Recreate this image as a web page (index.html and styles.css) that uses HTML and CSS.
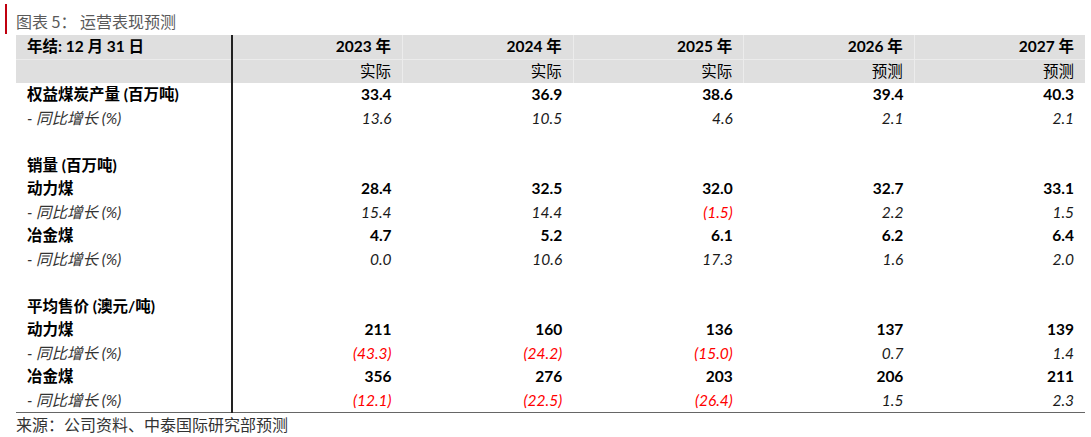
FILE: index.html
```html
<!DOCTYPE html>
<html lang="zh-CN">
<head>
<meta charset="utf-8">
<title>运营表现预测</title>
<link rel="stylesheet" href="styles.css">
</head>
<body>
<div class="page">
  <div class="title">图表 5： 运营表现预测</div>
  <table class="data">
    <colgroup>
      <col class="c-label"><col class="c-year"><col class="c-year"><col class="c-year"><col class="c-year"><col class="c-year">
    </colgroup>
    <thead>
      <tr class="h1">
        <th class="label">年结: 12 月 31 日</th>
        <th>2023 年</th><th>2024 年</th><th>2025 年</th><th>2026 年</th><th>2027 年</th>
      </tr>
      <tr class="h2">
        <th class="label"></th>
        <th>实际</th><th>实际</th><th>实际</th><th>预测</th><th>预测</th>
      </tr>
    </thead>
    <tbody>
      <tr class="main"><td class="label">权益煤炭产量 (百万吨)</td><td>33.4</td><td>36.9</td><td>38.6</td><td>39.4</td><td>40.3</td></tr>
      <tr class="sub"><td class="label">- 同比增长 (%)</td><td>13.6</td><td>10.5</td><td>4.6</td><td>2.1</td><td>2.1</td></tr>
      <tr class="blank"><td class="label"></td><td></td><td></td><td></td><td></td><td></td></tr>
      <tr class="main"><td class="label">销量 (百万吨)</td><td></td><td></td><td></td><td></td><td></td></tr>
      <tr class="main"><td class="label">动力煤</td><td>28.4</td><td>32.5</td><td>32.0</td><td>32.7</td><td>33.1</td></tr>
      <tr class="sub"><td class="label">- 同比增长 (%)</td><td>15.4</td><td>14.4</td><td class="neg">(1.5)</td><td>2.2</td><td>1.5</td></tr>
      <tr class="main"><td class="label">冶金煤</td><td>4.7</td><td>5.2</td><td>6.1</td><td>6.2</td><td>6.4</td></tr>
      <tr class="sub"><td class="label">- 同比增长 (%)</td><td>0.0</td><td>10.6</td><td>17.3</td><td>1.6</td><td>2.0</td></tr>
      <tr class="blank"><td class="label"></td><td></td><td></td><td></td><td></td><td></td></tr>
      <tr class="main"><td class="label">平均售价 (澳元/吨)</td><td></td><td></td><td></td><td></td><td></td></tr>
      <tr class="main"><td class="label">动力煤</td><td>211</td><td>160</td><td>136</td><td>137</td><td>139</td></tr>
      <tr class="sub"><td class="label">- 同比增长 (%)</td><td class="neg">(43.3)</td><td class="neg">(24.2)</td><td class="neg">(15.0)</td><td>0.7</td><td>1.4</td></tr>
      <tr class="main"><td class="label">冶金煤</td><td>356</td><td>276</td><td>203</td><td>206</td><td>211</td></tr>
      <tr class="sub last"><td class="label">- 同比增长 (%)</td><td class="neg">(12.1)</td><td class="neg">(22.5)</td><td class="neg">(26.4)</td><td>1.5</td><td>2.3</td></tr>
    </tbody>
  </table>
  <div class="source">来源：公司资料、中泰国际研究部预测</div>
</div>
</body>
</html>
```

FILE: styles.css
```css
html, body {
  margin: 0;
  padding: 0;
  background: #ffffff;
}

.page {
  width: 1091px;
  height: 437px;
  overflow: hidden;
  font-family: Lato, "Noto Sans CJK SC", sans-serif;
  color: #000;
}

.title {
  margin: 4px 0 0 5px;
  height: 30px;
  border-left: 2px solid #c0000f;
  padding-left: 9px;
  box-sizing: border-box;
  font-family: "Noto Sans CJK SC", sans-serif;
  font-size: 16px;
  line-height: 34px;
  color: #5a5a5a;
}

.data {
  margin: 1px 0 0 16px;
  border-collapse: collapse;
  table-layout: fixed;
  width: 1069px;
  font-size: 15.5px;
}

.c-label { width: 216px; }
.c-year { width: 170.6px; }

.data th,
.data td {
  height: 23.5px;
  padding: 0 11px 0 0;
  text-align: right;
  white-space: nowrap;
  line-height: 23.5px;
  box-sizing: border-box;
}

.data .label {
  text-align: left;
  padding: 0 0 0 11px;
  border-right: 2px solid #222;
}

.data thead th {
  background: #dfdfdf;
  font-weight: 700;
  border-left: 1px solid #ececec;
}

.data thead .h1 th {
  border-bottom: 1px solid #ececec;
}

.data thead th.label {
  border-left: none;
  border-right: 2px solid #222;
}

.data thead .h2 th {
  font-weight: 400;
}

.main td {
  font-weight: 700;
}

.sub td {
  font-style: italic;
  color: #1a1a1a;
}

.sub td.label {
  color: #333;
}

.data td.neg {
  color: #ff0000;
}

.last td {
  border-bottom: 1px solid #666;
}

.source {
  padding: 1px 0 0 16px;
  font-family: "Noto Sans CJK SC", serif;
  font-size: 16px;
  line-height: 20px;
  color: #333;
}
```
